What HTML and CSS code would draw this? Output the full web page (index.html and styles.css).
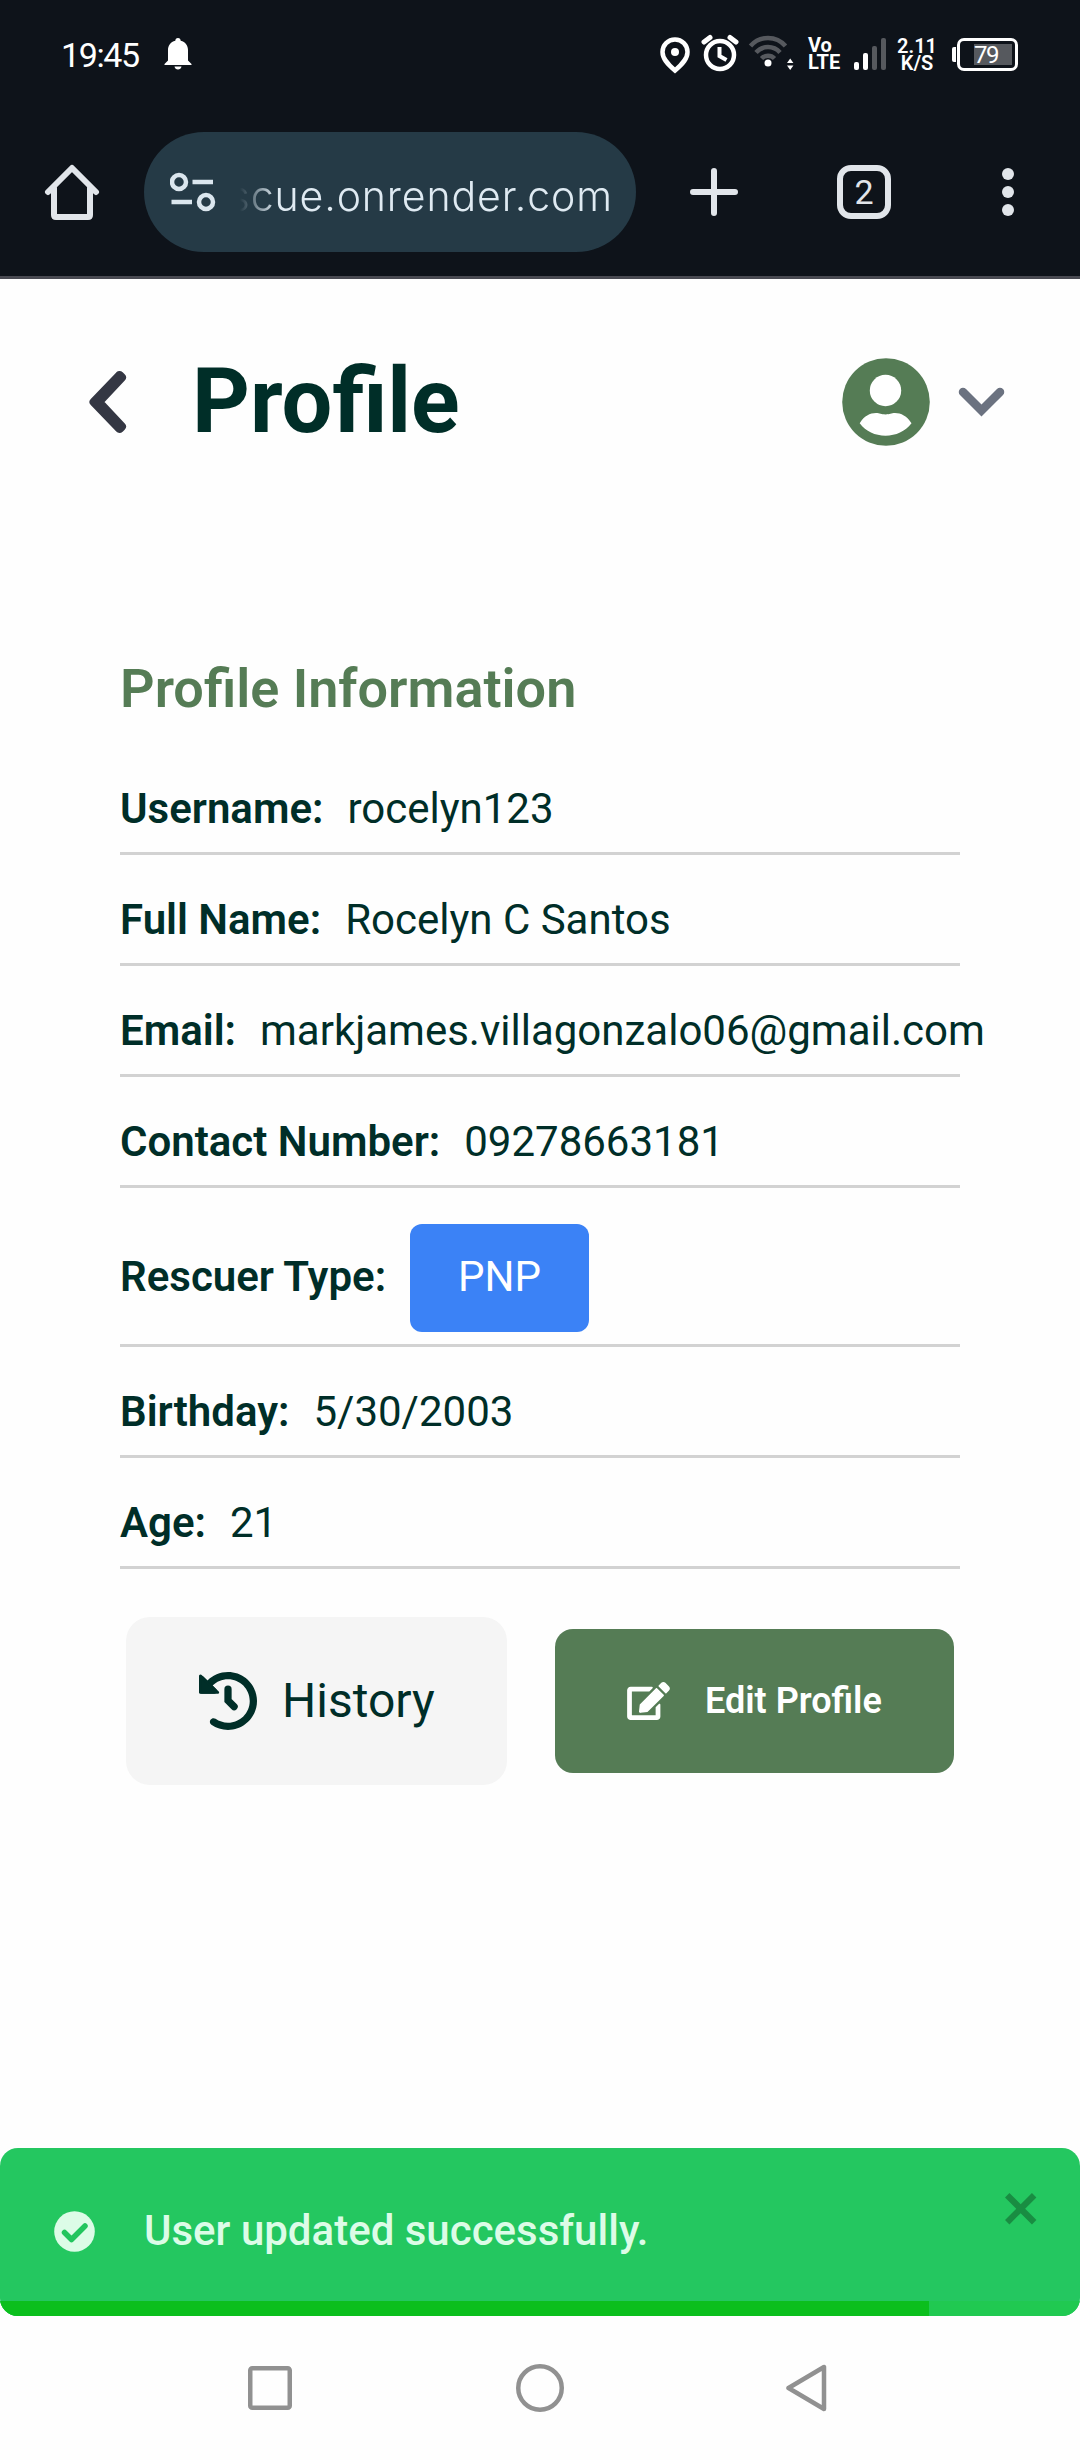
FILE: index.html
```html
<!DOCTYPE html>
<html lang="en">
<head>
<meta charset="utf-8">
<title>Profile</title>
<link rel="stylesheet" href="styles.css">
</head>
<body>
<div class="screen">
  <header class="chrome">
    <div class="status">
      <span class="time">19:45</span>
      <svg class="bell" width="28" height="32" viewBox="0 0 28 32" fill="#fff"><path d="M14 0c1.700 0 2.700 1.200 2.700 2.700C21.500 4 24 7.500 24 12v10.500L27.500 26v1H.5v-1L4 22.500V12C4 7.500 6.500 4 11.300 2.700 11.300 1.200 12.300 0 14 0zM10.500 28.500h7c-.3 2-1.700 3-3.500 3s-3.200-1-3.500-3z"/></svg>
      <svg class="system" width="140" height="40" viewBox="658 34 140 40" fill="none">
        <path d="M675 39.500c7 0 12.500 5.400 12.500 12.500 0 6.500-4.500 11.500-12.500 18.500-8-7-12.500-12-12.500-18.500 0-7.100 5.500-12.500 12.500-12.500z" stroke="#fff" stroke-width="4.500"/>
        <circle cx="675" cy="52" r="4" fill="#fff"/>
        <circle cx="720" cy="55" r="14" stroke="#fff" stroke-width="4.500"/>
        <path d="M719.500 47v9l7 4" stroke="#fff" stroke-width="4"/>
        <path d="M704 42l6-4.500M736 42l-6-4.500" stroke="#fff" stroke-width="5" stroke-linecap="round"/>
        <path d="M750.500 46a23 23 0 0 1 35 0M756 52.500a16 16 0 0 1 24 0M761.500 58.500a9 9 0 0 1 13 0" stroke="#56595e" stroke-width="4.500"/>
        <circle cx="768" cy="63" r="3.500" fill="#fff"/>
        <path d="M787 63l3.200-4.500 3.200 4.500zM787 65.500l3.200 4.500 3.200-4.500z" fill="#fff"/>
      </svg>
      <b class="volte">Vo<br>LTE</b>
      <span class="bars"><i class="bar b1"></i><i class="bar b2"></i><i class="bar b3"></i><i class="bar b4"></i></span>
      <b class="speed">2.11<br>K/S</b>
      <span class="battery"><i class="nub"></i><span class="cell"><span class="fill">79</span></span></span>
    </div>
    <div class="toolbar">
      <svg class="home" width="56" height="58" viewBox="0 0 56 58" fill="none" stroke="#e1e5ea" stroke-width="6" stroke-linecap="round" stroke-linejoin="round"><path d="M4 29L28 5l24 24M10 25v27q0 2 2 2h32q2 0 2-2V25"/></svg>
      <div class="omnibox">
        <svg width="46" height="40" viewBox="0 0 46 40" fill="none" stroke="#dbe6ee"><circle cx="9" cy="10" r="7" stroke-width="4.500"/><circle cx="36" cy="30" r="7" stroke-width="4.500"/><path d="M22.500 10H43M1.500 30H22" stroke-width="4.500"/></svg>
        <div class="url">scue.onrender.com</div>
      </div>
      <svg class="plus" width="48" height="48" viewBox="0 0 48 48" stroke="#e1e5ea" stroke-width="6" stroke-linecap="round"><path d="M24 3v42M3 24h42"/></svg>
      <div class="tabs">2</div>
      <div class="dots"><i></i><i></i><i></i></div>
    </div>
  </header>

  <main class="page">
    <div class="heading">
      <svg class="back" width="40" height="64" viewBox="0 0 40 64" fill="none" stroke="#343743" stroke-width="9.500" stroke-linejoin="round"><path d="M31.500 5.500L6 32l25.500 26.500 2-2L10.500 32l23-24.500z" fill="#343743" stroke-width="9"/></svg>
      <h1>Profile</h1>
      <svg class="avatar" width="88" height="88" viewBox="0 0 88 88"><circle cx="44" cy="44" r="43.800" fill="#557c55"/><circle cx="43.500" cy="32.500" r="15.700" fill="#fff"/><path d="M17.700 65.300C22 58 28 55 34 55c4 0 5 1.400 9.500 1.400S49 55 53 55c6 0 12 3 16.500 10.300C63 73.500 54 77.700 43.500 77.700S24 73.500 17.700 65.300z" fill="#fff"/></svg>
      <svg class="chev" width="47" height="30" viewBox="0 0 47 30" fill="none" stroke="#6b7280" stroke-width="8.500" stroke-linecap="round"><path d="M5 5l18.500 18.500L42 5"/></svg>
    </div>

    <section class="info">
      <h2>Profile Information</h2>
      <div class="row"><b>Username:</b><span>rocelyn123</span></div>
      <div class="row"><b>Full Name:</b><span>Rocelyn C Santos</span></div>
      <div class="row"><b>Email:</b><span>markjames.villagonzalo06@gmail.com</span></div>
      <div class="row"><b>Contact Number:</b><span>09278663181</span></div>
      <div class="row"><b>Rescuer Type:</b><span class="badge">PNP</span></div>
      <div class="row"><b>Birthday:</b><span>5/30/2003</span></div>
      <div class="row"><b>Age:</b><span>21</span></div>
      <div class="actions">
        <button class="history"><svg width="58" height="58" viewBox="0 0 512 512" fill="#002e28"><path d="M75 75L41 41C25.900 25.900 0 36.600 0 57.900V168c0 13.300 10.700 24 24 24H134.100c21.400 0 32.100-25.900 17-41l-30.800-30.800C155 85.500 203 64 256 64c106 0 192 86 192 192s-86 192-192 192c-40.800 0-78.600-12.700-109.700-34.400c-14.500-10.100-34.400-6.600-44.600 7.900s-6.600 34.400 7.900 44.600C151.200 495 201.700 512 256 512c141.400 0 256-114.600 256-256S397.400 0 256 0C185.300 0 121.300 28.700 75 75z"/><path d="M12 34v146h154z" stroke="#002e28" stroke-width="24" stroke-linejoin="round"/><path d="M256 152v100l54 54" fill="none" stroke="#002e28" stroke-width="64" stroke-linecap="round"/></svg><span>History</span></button>
        <button class="edit"><svg width="43" height="38" viewBox="0 0 576 512" fill="#fff"><path d="M402.600 83.200l90.200 90.200c3.800 3.800 3.800 10 0 13.800L274.400 405.600l-92.800 10.300c-12.400 1.400-22.900-9.100-21.500-21.500l10.300-92.800L388.800 83.200c3.800-3.800 10-3.800 13.800 0zm162-22.900l-48.800-48.800c-15.200-15.200-39.900-15.200-55.200 0l-35.400 35.400c-3.800 3.800-3.800 10 0 13.800l90.200 90.200c3.800 3.800 10 3.800 13.800 0l35.400-35.400c15.200-15.300 15.200-40 0-55.200zM384 346.200V448H64V128h229.800c3.200 0 6.200-1.300 8.500-3.500l40-40c7.600-7.600 2.200-20.500-8.500-20.500H48C21.500 64 0 85.500 0 112v352c0 26.500 21.500 48 48 48h352c26.500 0 48-21.500 48-48V306.200c0-10.700-12.900-16-20.500-8.500l-40 40c-2.200 2.300-3.500 5.300-3.500 8.500z"/></svg><span>Edit Profile</span></button>
      </div>
    </section>
  </main>

  <div class="toast">
    <div class="toast-body">
      <svg class="check" width="41" height="41" viewBox="0 0 41 41"><circle cx="20.500" cy="20.500" r="20.300" fill="#dcfce7"/><path d="M10.500 21.500l7 7L31 15" fill="none" stroke="#22c55e" stroke-width="5.500" stroke-linecap="round" stroke-linejoin="round"/></svg>
      <span>User updated successfully.</span>
      <svg class="close" width="42" height="48" viewBox="0 0 14 16" fill="#198d42"><path d="M7.710 8.230l3.750 3.750-1.480 1.480-3.750-3.750-3.750 3.750L1 11.980l3.750-3.750L1 4.480 2.480 3l3.750 3.750L9.980 3l1.480 1.480-3.750 3.750z"/></svg>
    </div>
    <div class="progress"><div class="progress-bar" style="width:929px"></div></div>
  </div>

  <nav class="navbar">
    <svg width="48" height="48" viewBox="0 0 48 48" fill="none" stroke="#919191" stroke-width="4.500"><rect x="4.250" y="4.250" width="39.500" height="39.500" rx="2"/></svg>
    <svg width="48" height="48" viewBox="0 0 48 48" fill="none" stroke="#919191" stroke-width="4.500"><circle cx="24" cy="24" r="21.750"/></svg>
    <svg width="48" height="48" viewBox="0 0 48 48" fill="none" stroke="#919191" stroke-width="4.500" stroke-linejoin="round"><path d="M2.500 24L38 3v42z"/></svg>
  </nav>
</div>
</body>
</html>
```
FILE: styles.css
```css
* { box-sizing: border-box; }
body { margin: 0; font-family: Roboto, sans-serif; color: #002e28; background: #fff; }
svg { display: block; flex: none; }
h1, h2 { margin: 0; }
.screen { width: 1080px; height: 2460px; display: flex; flex-direction: column; background: #fefefe; }

.chrome { height: 279px; background: #0e131a; border-bottom: 3px solid #494a52; }
.status { height: 108px; padding: 0 61px 0 61px; display: flex; align-items: center; color: #fff; }
.time { width: 79px; font-size: 34px; letter-spacing: -1.4px; line-height: 40px; padding-top: 1px; white-space: nowrap; }
.bell { margin-left: 24px; }
.system { margin-left: 466px; }
.volte, .speed { font-weight: 700; font-size: 20px; line-height: 17.5px; }
.volte { width: 36px; margin-left: 10px; }
.bars { height: 32px; margin-left: 10px; display: flex; align-items: flex-end; gap: 4px; }
.bar { width: 5px; border-radius: 2px; background: #fff; }
.b1 { height: 8px; }
.b2 { height: 17px; }
.b3 { height: 24px; background: #56595e; }
.b4 { height: 32px; background: #56595e; }
.speed { width: 42px; margin-left: 10px; padding-top: 2px; font-weight: 600; text-align: center; }
.battery { display: flex; align-items: center; gap: 1px; margin-left: 14px; }
.nub { width: 4px; height: 15px; border-radius: 2px 0 0 2px; background: #fff; }
.cell { width: 61px; height: 33px; border: 3px solid #fff; border-radius: 7px; padding: 3px 3px 3px 14px; }
.fill { display: block; height: 21px; font-size: 24px; line-height: 22px; letter-spacing: -1.5px; background: #56595e; }

.toolbar { height: 168px; display: flex; align-items: center; padding: 0 66px 0 44px; }
.omnibox { width: 492px; height: 120px; margin-left: 44px; padding-left: 26px; border-radius: 60px; background: #253a46; display: flex; align-items: center; }
.url { width: 373px; height: 60px; margin: 7px 0 0 24px; display: flex; justify-content: flex-end; overflow: hidden; font: 300 41px/60px Inter, sans-serif; letter-spacing: 0.9px; color: #dfeaf2; white-space: nowrap; -webkit-mask-image: linear-gradient(90deg, transparent, #000 36px); mask-image: linear-gradient(90deg, transparent, #000 36px); }
.plus { margin-left: 54px; }
.tabs { width: 54px; height: 54px; margin-left: 99px; border: 6px solid #e1e5ea; border-radius: 14px; color: #e1e5ea; font-size: 34px; line-height: 43px; text-align: center; }
.dots { margin-left: auto; display: flex; flex-direction: column; gap: 6px; }
.dots i { width: 12px; height: 12px; border-radius: 50%; background: #e1e5ea; }

.page { flex: 1; }
.heading { padding: 72px 75px 0 88px; height: 174px; display: flex; align-items: center; }
h1 { margin-left: 64px; font-size: 90px; line-height: 102px; font-weight: 700; }
.avatar { margin-left: auto; }
.chev { margin-left: 28px; }
.info { margin: 195px 120px 0; }
h2 { font-size: 54px; line-height: 82px; margin-bottom: 50px; color: #557c55; font-weight: 600; }
.row { margin-bottom: 36px; padding-bottom: 12px; border-bottom: 3px solid #d2d2d2; display: flex; align-items: center; gap: 24px; font-size: 42px; line-height: 57px; white-space: nowrap; }
.row b { font-weight: 600; }
.row b, .row span { padding-bottom: 3px; }
.row .badge { height: 108px; padding: 0 48px 3px; line-height: 105px; border-radius: 12px; color: #fff; background: #3b82f6; }
.actions { display: flex; align-items: center; justify-content: space-between; margin-top: 48px; padding: 0 6px; }
.actions button { border: 0; display: flex; align-items: center; font-family: inherit; }
.history { width: 381px; height: 168px; padding: 0 0 0 73px; gap: 25px; border-radius: 24px; background: #f5f5f5; color: #002e28; font-size: 48px; }
.history span { padding-bottom: 2px; }
.edit { width: 399px; height: 144px; padding: 0 0 0 72px; gap: 35px; border-radius: 18px; background: #557c55; color: #fff; font-size: 36px; font-weight: 600; }

.toast { height: 168px; border-radius: 18px; overflow: hidden; background: #24c760; display: flex; flex-direction: column; }
.toast-body { flex: 1; display: flex; align-items: flex-start; color: #dcfce7; font-size: 42px; font-weight: 500; }
.toast-body span { margin: 51px 0 0 49px; line-height: 63px; }
.check { margin: 63px 0 0 54px; }
.close { margin: 36px 36px 0 auto; }
.progress { height: 15px; background: #20c951; }
.progress-bar { height: 15px; background: #0bbf1d; }
.navbar { height: 144px; display: flex; justify-content: space-between; padding: 48px 246px; }
```
